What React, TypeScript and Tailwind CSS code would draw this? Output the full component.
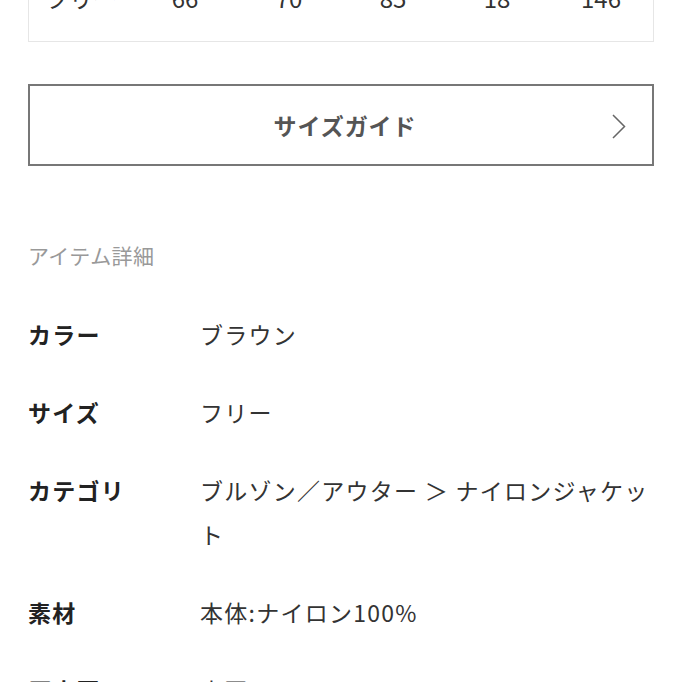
// サイズ表の最後の行 (上は画面外)
const sizeRow = ['フリー', '66', '70', '85', '18', '146'];

// アイテム詳細
const details: { label: string; value: string }[] = [
    { label: 'カラー', value: 'ブラウン' },
    { label: 'サイズ', value: 'フリー' },
    { label: 'カテゴリ', value: 'ブルゾン／アウター ＞ ナイロンジャケット' },
    { label: '素材', value: '本体:ナイロン100%' },
    { label: '原産国', value: '中国' },
];

export default function App() {
    return (
        <main className="w-[682px] h-[682px] overflow-hidden bg-white px-[28px] font-['Noto_Sans_CJK_JP','Noto_Sans',sans-serif]">
            {/* サイズ表 */}
            <div className="-mt-[26px] border border-[#e6e6e6] pb-[20px]">
                <div className="grid grid-cols-6 h-[46px] items-center text-center text-[24px] text-[#333]">
                    {sizeRow.map((c, i) => <span key={i}>{c}</span>)}
                </div>
            </div>

            {/* サイズガイド ボタン */}
            <button className="relative mt-[42px] flex h-[82px] w-full items-center justify-center border-2 border-[#777] text-[23px] font-bold tracking-[0.04em] text-[#555]">
                <span className="ml-[8px]">サイズガイド</span>
                <svg className="absolute right-[26px] top-[28px]" width="14" height="25" viewBox="0 0 14 25" fill="none">
                    <polyline points="1,1 12.5,12.5 1,24" stroke="#666" strokeWidth="1.5" />
                </svg>
            </button>

            <h2 className="mt-[74px] text-[21px] leading-[30px] tracking-[0.02em] text-[#999]">アイテム詳細</h2>

            <dl className="mt-[42px] flex flex-col gap-[34px]">
                {details.map(d => (
                    <div key={d.label} className="flex text-[23px] leading-[44px] tracking-[0.055em]">
                        <dt className="w-[172px] shrink-0 font-bold text-[#222]">{d.label}</dt>
                        <dd className="flex-1 text-[#333]">{d.value}</dd>
                    </div>
                ))}
            </dl>
        </main>
    );
}
